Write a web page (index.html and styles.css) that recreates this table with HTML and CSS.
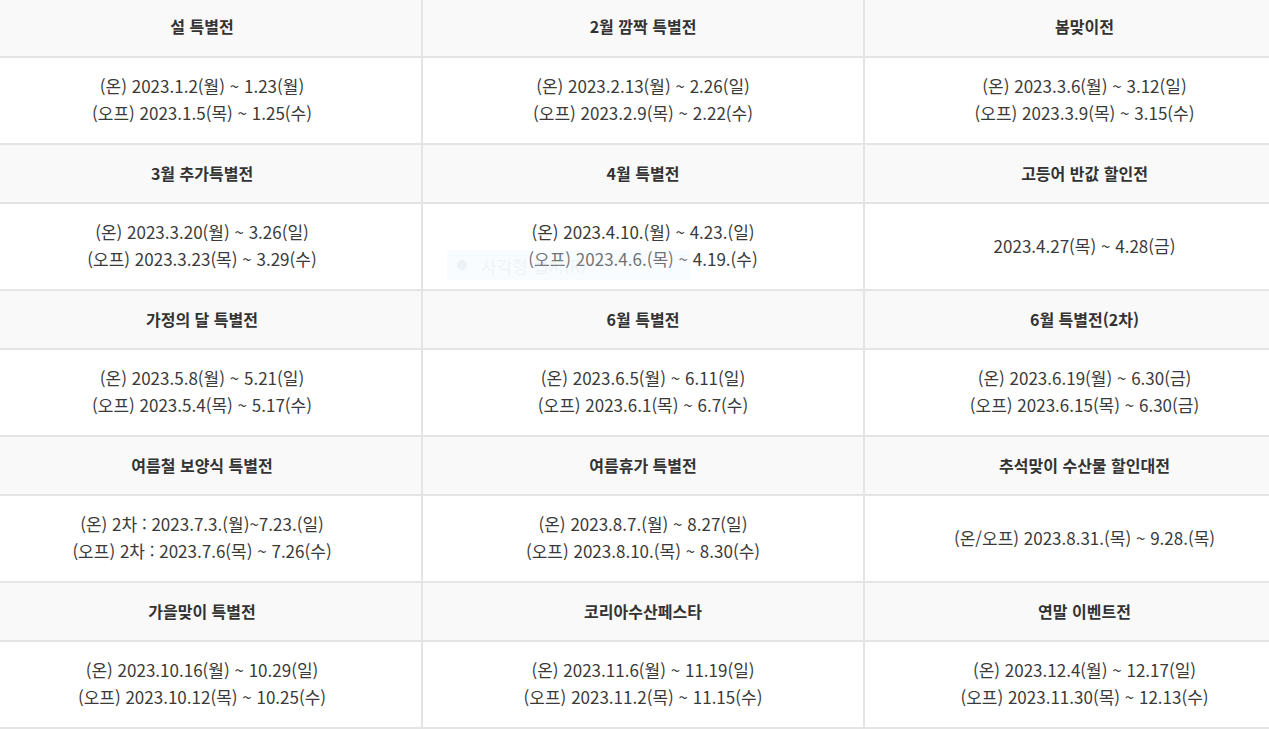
FILE: index.html
```html
<!DOCTYPE html>
<html lang="ko">
<head>
<meta charset="utf-8">
<link rel="stylesheet" href="styles.css">
</head>
<body>
<div class="wrap">
<table class="events">
  <colgroup><col class="c1"><col class="c2"><col class="c3"></colgroup>
  <tr class="head"><th>설 특별전</th><th>2월 깜짝 특별전</th><th>봄맞이전</th></tr>
  <tr class="data">
    <td>(온) 2023.1.2(월) ~ 1.23(월)<br>(오프) 2023.1.5(목) ~ 1.25(수)</td>
    <td>(온) 2023.2.13(월) ~ 2.26(일)<br>(오프) 2023.2.9(목) ~ 2.22(수)</td>
    <td>(온) 2023.3.6(월) ~ 3.12(일)<br>(오프) 2023.3.9(목) ~ 3.15(수)</td>
  </tr>
  <tr class="head"><th>3월 추가특별전</th><th>4월 특별전</th><th>고등어 반값 할인전</th></tr>
  <tr class="data">
    <td>(온) 2023.3.20(월) ~ 3.26(일)<br>(오프) 2023.3.23(목) ~ 3.29(수)</td>
    <td>(온) 2023.4.10.(월) ~ 4.23.(일)<br>(오프) 2023.4.6.(목) ~ 4.19.(수)</td>
    <td>2023.4.27(목) ~ 4.28(금)</td>
  </tr>
  <tr class="head"><th>가정의 달 특별전</th><th>6월 특별전</th><th>6월 특별전(2차)</th></tr>
  <tr class="data">
    <td>(온) 2023.5.8(월) ~ 5.21(일)<br>(오프) 2023.5.4(목) ~ 5.17(수)</td>
    <td>(온) 2023.6.5(월) ~ 6.11(일)<br>(오프) 2023.6.1(목) ~ 6.7(수)</td>
    <td>(온) 2023.6.19(월) ~ 6.30(금)<br>(오프) 2023.6.15(목) ~ 6.30(금)</td>
  </tr>
  <tr class="head"><th>여름철 보양식 특별전</th><th>여름휴가 특별전</th><th>추석맞이 수산물 할인대전</th></tr>
  <tr class="data">
    <td>(온) 2차 : 2023.7.3.(월)~7.23.(일)<br>(오프) 2차 : 2023.7.6(목) ~ 7.26(수)</td>
    <td>(온) 2023.8.7.(월) ~ 8.27(일)<br>(오프) 2023.8.10.(목) ~ 8.30(수)</td>
    <td>(온/오프) 2023.8.31.(목) ~ 9.28.(목)</td>
  </tr>
  <tr class="head"><th>가을맞이 특별전</th><th>코리아수산페스타</th><th>연말 이벤트전</th></tr>
  <tr class="data">
    <td>(온) 2023.10.16(월) ~ 10.29(일)<br>(오프) 2023.10.12(목) ~ 10.25(수)</td>
    <td>(온) 2023.11.6(월) ~ 11.19(일)<br>(오프) 2023.11.2(목) ~ 11.15(수)</td>
    <td>(온) 2023.12.4(월) ~ 12.17(일)<br>(오프) 2023.11.30(목) ~ 12.13(수)</td>
  </tr>
</table>
<div class="capture"><span class="dot"></span><span class="cap-text">사각형 캡처(R)</span></div>
</div>
</body>
</html>
```
FILE: styles.css
```css
html, body {
  margin: 0;
  padding: 0;
  background: #ffffff;
  overflow: hidden;
}
.wrap {
  position: relative;
  width: 1269px;
  height: 730px;
  overflow: hidden;
}
.events {
  border-collapse: collapse;
  table-layout: fixed;
  width: 1323px;
  margin-top: -4px;
  margin-left: -19px;
  font-family: "Noto Sans CJK KR", "Noto Sans", sans-serif;
  font-size: 16px;
  color: #333333;
}
.c1 { width: 440px; }
.c2 { width: 442px; }
.c3 { width: 441px; }
.events th,
.events td {
  border: 2px solid #e4e4e4;
  text-align: center;
  vertical-align: middle;
  padding: 0;
}
.head th {
  height: 55px;
  padding-bottom: 2px;
  background: #f9f9f9;
  font-weight: 700;
  color: #333333;
}
.head:first-child th {
  height: 56px;
}
.data td {
  height: 82px;
  padding-bottom: 3px;
  font-size: 17px;
  line-height: 27px;
  font-weight: 400;
  color: #3a3a3a;
  background: #ffffff;
}
.capture {
  position: absolute;
  left: 447px;
  top: 250px;
  width: 243px;
  height: 30px;
  background: rgba(235, 245, 252, 0.3);
  display: flex;
  align-items: center;
  gap: 14px;
  padding-left: 10px;
  box-sizing: border-box;
  pointer-events: none;
}
.dot {
  width: 10px;
  height: 10px;
  border-radius: 50%;
  background: rgba(200, 210, 220, 0.25);
}
.cap-text {
  font-family: "Noto Sans CJK KR", sans-serif;
  font-size: 17px;
  color: rgba(200, 215, 228, 0.25);
}
```
